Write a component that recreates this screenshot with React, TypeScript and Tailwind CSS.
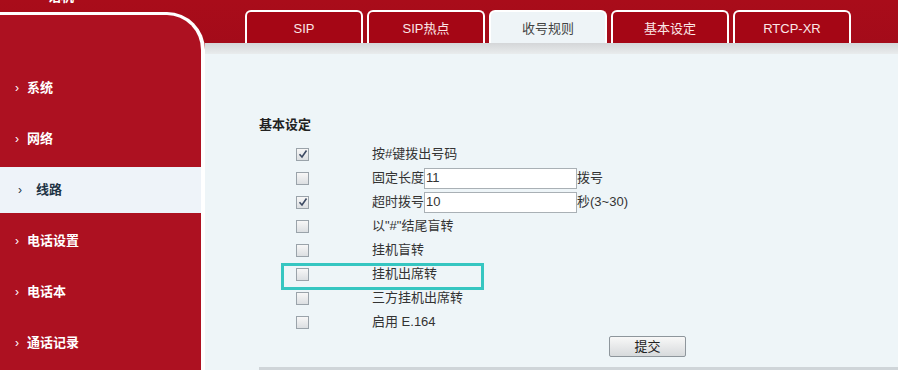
import React from "react"

const font = { fontFamily: '"Liberation Sans", "Noto Sans CJK SC", sans-serif' }

function Check({ on }: { on?: boolean }) {
  return (
    <div className="w-[13px] h-[13px] border border-[#9aa3aa] bg-gradient-to-b from-[#f7f7f7] to-[#dcdfe2] flex items-center justify-center">
      {on && (
        <svg width="10" height="10" viewBox="0 0 10 10">
          <path d="M1.5 5.2 L4 8 L8.5 1.5" fill="none" stroke="#3c4a63" strokeWidth="1.6" />
        </svg>
      )}
    </div>
  )
}

export default function App() {
  const menu = ["系统", "网络", "线路", "电话设置", "电话本", "通话记录"]
  const tabs = ["SIP", "SIP热点", "收号规则", "基本设定", "RTCP-XR"]

  return (
    <div style={font} className="relative w-[898px] h-[370px] overflow-hidden bg-gradient-to-b from-[#a90c1a] to-[#7e0514]">
      <span className="absolute left-[48px] top-[-13px] text-white text-[13px] font-bold">话机</span>
      <div className="flex h-full">
        {/* Sidebar */}
        <div className="w-[205px] mt-[12px] flex-shrink-0 bg-[#ad1121] border-t-[3px] border-r-[4px] border-white rounded-tr-[38px] pt-[50px] flex flex-col gap-[5px]">
          {menu.map((m) =>
            m === "线路" ? (
              <div key={m} className="h-[46px] bg-[#eef3f9] flex items-center pl-[18px] gap-[14px] text-[#1f3345]">
                <span className="text-[12px]">›</span>
                <span className="text-[13px] font-bold">{m}</span>
              </div>
            ) : (
              <div key={m} className="h-[46px] flex items-center pl-[15px] gap-[8px] text-white">
                <span className="text-[12px]">›</span>
                <span className="text-[13px] font-bold">{m}</span>
              </div>
            )
          )}
        </div>

        {/* Main */}
        <div className="flex-1 flex flex-col">
          <div className="h-[48px] flex items-end pl-[40px] gap-[4px]">
            {tabs.map((t) => (
              <div
                key={t}
                className={
                  t === "收号规则"
                    ? "w-[118px] h-[35px] mb-[-2px] rounded-t-[6px] bg-[#eef4f7] border-2 border-b-0 border-white flex items-center justify-center text-[13px] text-[#444]"
                    : "w-[118px] h-[35px] mb-[-2px] rounded-t-[6px] bg-[#a50615] border-2 border-b-0 border-white flex items-center justify-center text-[13px] text-[#fbe7e7]"
                }
              >
                {t}
              </div>
            ))}
          </div>
          <div className="h-[12px] bg-gradient-to-b from-[#d4d6d8] to-[#e9eced]" />
          <div className="flex-1 bg-[#eef5f8] pl-[54px] pt-[63px] text-[13px] text-[#333]">
            <div className="font-bold text-[13px] text-[#222] h-[16px] leading-[16px]">基本设定</div>
            <div className="mt-[9px] flex flex-col">
              {[
                { on: true, l: "按#键拨出号码" },
                { on: false, l: "固定长度", v: "11", s: "拨号" },
                { on: true, l: "超时拨号", v: "10", s: "秒(3~30)" },
                { on: false, l: "以\"#\"结尾盲转" },
                { on: false, l: "挂机盲转" },
                { on: false, l: "挂机出席转" },
                { on: false, l: "三方挂机出席转" },
                { on: false, l: "启用 E.164" },
              ].map((r, i) => (
                <div key={i} className="flex items-center h-[24px]">
                  <div className="w-[113px] pl-[37px]">
                    <Check on={r.on} />
                  </div>
                  <span>{r.l}</span>
                  {r.v && (
                    <>
                      <div className="w-[153px] h-[21px] bg-white border border-[#a9b0b5] flex items-center px-[1px] text-[13px]">{r.v}</div>
                      <span>{r.s}</span>
                    </>
                  )}
                </div>
              ))}
            </div>
            <div className="flex pl-[350px] mt-[2px]">
              <button className="w-[77px] h-[21px] rounded-[2px] border border-[#8e969c] bg-gradient-to-b from-[#f8f8f8] to-[#d7dadc] text-[13px] text-[#222] flex items-center justify-center">
                提交
              </button>
            </div>
            <div className="mt-[10px] h-[3px] bg-[#cfd5d9]" />
          </div>
        </div>
      </div>

      {/* annotation */}
      <div className="absolute left-[281px] top-[263px] w-[203px] h-[27px] border-[3px] border-[#36c6c1]" />
    </div>
  )
}
